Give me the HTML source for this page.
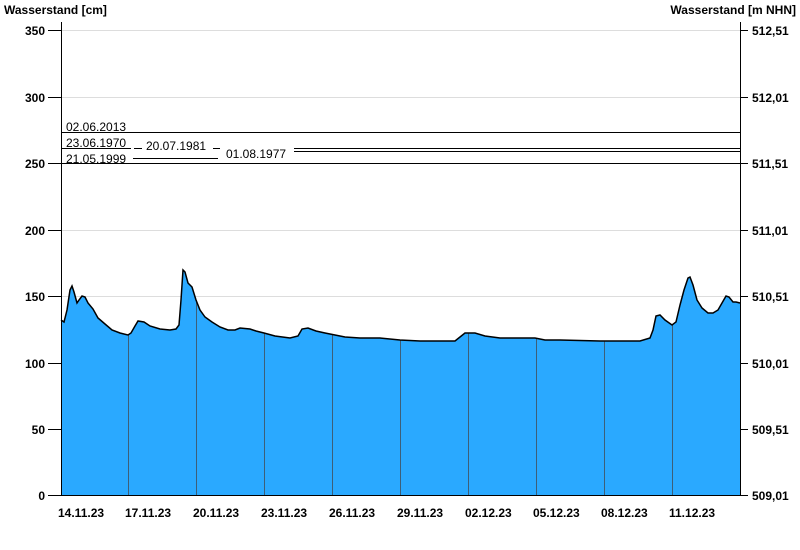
<!DOCTYPE html>
<html><head><meta charset="utf-8"><style>
html,body{margin:0;padding:0;background:#fff;width:800px;height:550px;overflow:hidden}
svg{display:block;font-family:"Liberation Sans",Arial,sans-serif}
.b{font-weight:bold;font-size:12px;fill:#000}
.s{font-size:12px;fill:#000}
</style></head><body>
<svg width="800" height="550" viewBox="0 0 800 550">
<text class="b" x="4" y="14">Wasserstand [cm]</text>
<text class="b" x="796" y="14" text-anchor="end">Wasserstand [m NHN]</text>
<g stroke="#dddddd" stroke-width="1">
<line x1="61" x2="740" y1="30.5" y2="30.5"/><line x1="61" x2="740" y1="97.5" y2="97.5"/>
<line x1="61" x2="740" y1="230.5" y2="230.5"/><line x1="61" x2="740" y1="296.5" y2="296.5"/>
<line x1="61" x2="740" y1="363.5" y2="363.5"/><line x1="61" x2="740" y1="429.5" y2="429.5"/>
</g>
<path fill="#2aa9ff" stroke="none" d="M61,320 L64,322 67,310 70,290 72,286 74,292 77,303 79,300 82,296 85,297 88,303 93,309 98,318 105,324 112,330 120,333 128,335 131,333 135,326 138,321 144,322 150,326 160,329 170,330 176,329 179,325 181,300 183,270 185,272 188,283 192,287 196,300 200,310 205,317 212,322 220,327 228,330 235,330 240,328 250,329 256,331 264,333 275,336 290,338 298,336 302,329 308,328 316,331 325,333 335,335 345,337 360,338 380,338 400,340 420,341 455,341 460,337 465,333 475,333 485,336 500,338 535,338 545,340 560,340 600,341 640,341 650,338 653,330 656,316 660,315 665,320 672,325 676,322 680,305 684,290 688,278 690,277 693,285 697,300 702,308 708,313 713,313 718,310 722,303 726,296 729,297 733,302 736,302 740,303 L740,495 L61,495 Z"/>
<g stroke="#3d5f78" stroke-width="1">
<line x1="128.5" x2="128.5" y1="335" y2="495"/><line x1="196.5" x2="196.5" y1="300" y2="495"/>
<line x1="264.5" x2="264.5" y1="333" y2="495"/><line x1="332.5" x2="332.5" y1="334" y2="495"/>
<line x1="400.5" x2="400.5" y1="340" y2="495"/><line x1="468.5" x2="468.5" y1="333" y2="495"/>
<line x1="536.5" x2="536.5" y1="338" y2="495"/><line x1="604.5" x2="604.5" y1="341" y2="495"/>
<line x1="672.5" x2="672.5" y1="325" y2="495"/>
</g>
<path fill="none" stroke="#000" stroke-width="1.5" d="M61,320 L64,322 67,310 70,290 72,286 74,292 77,303 79,300 82,296 85,297 88,303 93,309 98,318 105,324 112,330 120,333 128,335 131,333 135,326 138,321 144,322 150,326 160,329 170,330 176,329 179,325 181,300 183,270 185,272 188,283 192,287 196,300 200,310 205,317 212,322 220,327 228,330 235,330 240,328 250,329 256,331 264,333 275,336 290,338 298,336 302,329 308,328 316,331 325,333 335,335 345,337 360,338 380,338 400,340 420,341 455,341 460,337 465,333 475,333 485,336 500,338 535,338 545,340 560,340 600,341 640,341 650,338 653,330 656,316 660,315 665,320 672,325 676,322 680,305 684,290 688,278 690,277 693,285 697,300 702,308 708,313 713,313 718,310 722,303 726,296 729,297 733,302 736,302 740,303"/>
<g stroke="#000" stroke-width="1">
<line x1="61.5" x2="61.5" y1="22" y2="495"/><line x1="740.5" x2="740.5" y1="22" y2="495"/>
<line x1="61" x2="740" y1="495.5" y2="495.5"/>
<line x1="61" x2="740" y1="132.5" y2="132.5"/>
<line x1="61" x2="131" y1="148.5" y2="148.5"/>
<line x1="134" x2="142" y1="148.5" y2="148.5"/>
<line x1="213" x2="220" y1="148.5" y2="148.5"/>
<line x1="294" x2="740" y1="148.5" y2="148.5"/>
<line x1="294" x2="740" y1="151.5" y2="151.5"/>
<line x1="133" x2="218" y1="158.5" y2="158.5"/>
<line x1="61" x2="740" y1="163.5" y2="163.5"/>
</g>
<g stroke="#000">
<line x1="48" x2="61" y1="30.5" y2="30.5"/><line x1="48" x2="61" y1="97.5" y2="97.5"/><line x1="48" x2="61" y1="163.5" y2="163.5"/><line x1="48" x2="61" y1="230.5" y2="230.5"/><line x1="48" x2="61" y1="296.5" y2="296.5"/><line x1="48" x2="61" y1="363.5" y2="363.5"/><line x1="48" x2="61" y1="429.5" y2="429.5"/><line x1="48" x2="61" y1="495.5" y2="495.5"/>
<line x1="740" x2="748" y1="30.5" y2="30.5"/><line x1="740" x2="748" y1="97.5" y2="97.5"/><line x1="740" x2="748" y1="163.5" y2="163.5"/><line x1="740" x2="748" y1="230.5" y2="230.5"/><line x1="740" x2="748" y1="296.5" y2="296.5"/><line x1="740" x2="748" y1="363.5" y2="363.5"/><line x1="740" x2="748" y1="429.5" y2="429.5"/><line x1="740" x2="748" y1="495.5" y2="495.5"/>
</g>
<g text-anchor="end">
<text class="b" x="45" y="35">350</text><text class="b" x="45" y="102">300</text><text class="b" x="45" y="168">250</text><text class="b" x="45" y="235">200</text><text class="b" x="45" y="301">150</text><text class="b" x="45" y="368">100</text><text class="b" x="45" y="434">50</text><text class="b" x="45" y="500">0</text>
</g>
<g>
<text class="b" x="752" y="35">512,51</text><text class="b" x="752" y="102">512,01</text><text class="b" x="752" y="168">511,51</text><text class="b" x="752" y="235">511,01</text><text class="b" x="752" y="301">510,51</text><text class="b" x="752" y="368">510,01</text><text class="b" x="752" y="434">509,51</text><text class="b" x="752" y="500">509,01</text>
</g>
<g>
<text class="s" x="66" y="131">02.06.2013</text>
<text class="s" x="66" y="147">23.06.1970</text>
<text class="s" x="146" y="150">20.07.1981</text>
<text class="s" x="226" y="158">01.08.1977</text>
<text class="s" x="66" y="163">21.05.1999</text>
</g>
<g>
<text class="b" x="58" y="517">14.11.23</text><text class="b" x="125" y="517">17.11.23</text><text class="b" x="193" y="517">20.11.23</text><text class="b" x="261" y="517">23.11.23</text><text class="b" x="329" y="517">26.11.23</text><text class="b" x="397" y="517">29.11.23</text><text class="b" x="465" y="517">02.12.23</text><text class="b" x="533" y="517">05.12.23</text><text class="b" x="601" y="517">08.12.23</text><text class="b" x="669" y="517">11.12.23</text>
</g>
</svg>
</body></html>
